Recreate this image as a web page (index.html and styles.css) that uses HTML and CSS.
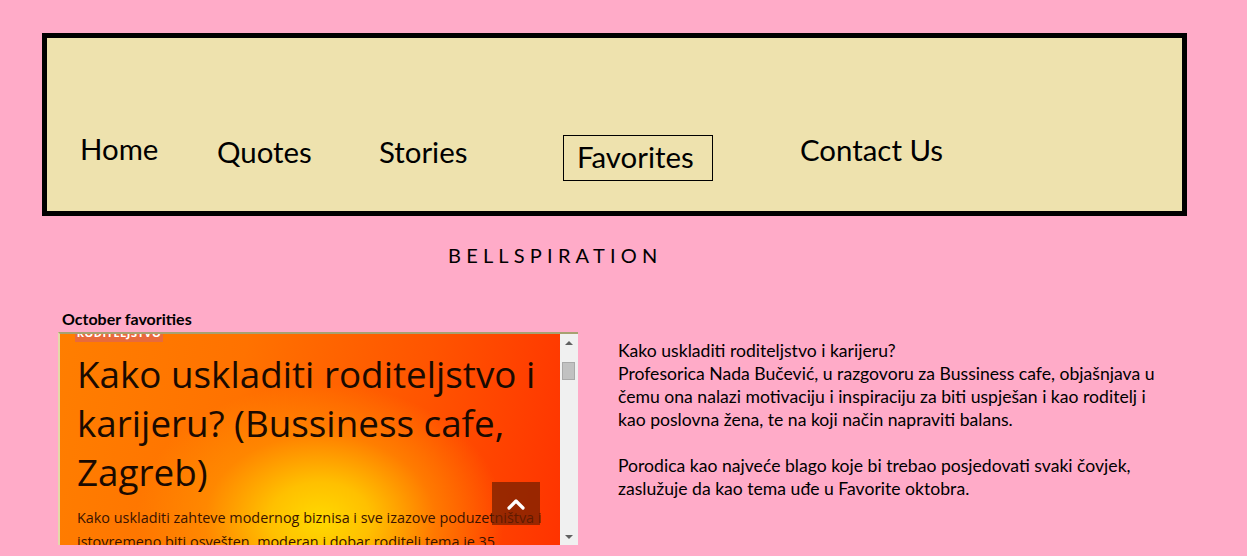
FILE: index.html
```html
<!DOCTYPE html>
<html lang="hr">
<head>
<meta charset="utf-8">
<title>Bellspiration - Favorites</title>
<link rel="stylesheet" href="styles.css">
</head>
<body>
<header class="masthead">
  <nav class="menu">
    <a class="menu-item item-home" href="#">Home</a>
    <a class="menu-item item-quotes" href="#">Quotes</a>
    <a class="menu-item item-stories" href="#">Stories</a>
    <a class="menu-item item-favorites" href="#"><span class="current">Favorites</span></a>
    <a class="menu-item item-contact" href="#">Contact Us</a>
  </nav>
</header>

<h1 class="site-title">BELLSPIRATION</h1>

<main class="content">
  <section class="feature">
    <h2 class="feature-title">October favorities</h2>
    <div class="embed">
      <div class="embed-page">
        <span class="embed-label">RODITELJSTVO</span>
        <h3 class="embed-heading">Kako uskladiti roditeljstvo i karijeru? (Bussiness cafe, Zagreb)</h3>
        <p class="embed-text">Kako uskladiti zahteve modernog biznisa i sve izazove poduzetništva i istovremeno biti osvešten, moderan i dobar roditelj tema je 35</p>
        <span class="to-top">
          <svg width="18" height="12" viewBox="0 0 18 12"><path d="M2 10 L9 3 L16 10" fill="none" stroke="#fff" stroke-width="3.2" stroke-linecap="round" stroke-linejoin="round"/></svg>
        </span>
      </div>
      <div class="scrollbar">
        <span class="arrow arrow-up"></span>
        <div class="track"><span class="thumb"></span></div>
        <span class="arrow arrow-down"></span>
      </div>
    </div>
  </section>
  <section class="description">
    <p>Kako uskladiti roditeljstvo i karijeru?<br>Profesorica Nada Bučević, u razgovoru za Bussiness cafe, objašnjava u čemu ona nalazi motivaciju i inspiraciju za biti uspješan i kao roditelj i kao poslovna žena, te na koji način napraviti balans.</p>
    <p>Porodica kao najveće blago koje bi trebao posjedovati svaki čovjek, zaslužuje da kao tema uđe u Favorite oktobra.</p>
  </section>
</main>
</body>
</html>
```

FILE: styles.css
```css
html, body {
  margin: 0;
  padding: 0;
}

body {
  background: #ffabc8;
  color: #000;
  font-family: "Lato", "Open Sans", sans-serif;
  padding: 33px 0 0 42px;
  height: 556px;
  box-sizing: border-box;
  overflow: hidden;
}

.masthead {
  width: 1145px;
  height: 183px;
  box-sizing: border-box;
  border: 5px solid #000;
  background: #eee2ae;
}

.menu {
  display: grid;
  grid-template-columns: 137px 162px 184px 237px auto;
  padding: 0 0 0 33px;
  align-items: start;
}

.menu-item {
  color: #000;
  text-decoration: none;
  font-size: 29.4px;
  line-height: 36px;
  white-space: nowrap;
  justify-self: start;
}

.item-home { margin-top: 93px; }
.item-quotes { margin-top: 96px; }
.item-stories { margin-top: 96px; }
.item-contact { margin-top: 94px; }

.item-favorites {
  margin-top: 97px;
  border: 1px solid #000;
  width: 150px;
  height: 46px;
  box-sizing: border-box;
  padding: 3px 0 0 13px;
}

.site-title {
  margin: 27px 0 0 406px;
  font-size: 20px;
  font-weight: 400;
  letter-spacing: 5.2px;
  line-height: 24px;
  color: #000;
}

.content {
  display: flex;
  align-items: flex-start;
  margin-top: 43px;
}

.feature {
  margin-left: 16px;
  width: 520px;
}

.feature-title {
  margin: 0 0 4px 4px;
  font-size: 16px;
  font-weight: 700;
  line-height: 18px;
}

.embed {
  display: flex;
  width: 520px;
  height: 213px;
  box-sizing: border-box;
  border-top: 2px solid #a7a171;
  border-left: 2px solid #e5d9a9;
  overflow: hidden;
}

.embed-page {
  position: relative;
  flex: 1;
  overflow: hidden;
  padding: 0 8px 0 17px;
  background:
    radial-gradient(ellipse 230px 170px at 52% 88%, #ffd900 0%, #ffc000 22%, rgba(255,150,0,0.6) 50%, rgba(255,120,0,0) 80%),
    linear-gradient(100deg, #ff7e00 0%, #ff7200 35%, #ff5400 70%, #ff3300 100%);
}

.embed-label {
  display: block;
  width: 88px;
  margin: -10px 0 0 -2px;
  height: 18px;
  line-height: 18px;
  background: #e86a3c;
  color: #fff;
  font-family: "Open Sans", sans-serif;
  font-size: 11px;
  font-weight: 700;
  text-align: center;
  letter-spacing: 0.5px;
}

.embed-heading {
  margin: 8px 0 0 0;
  font-family: "Open Sans", sans-serif;
  font-weight: 400;
  font-size: 36.8px;
  line-height: 49px;
  color: #1a0a00;
}

.embed-text {
  margin: 9px 0 0 0;
  font-family: "Open Sans", sans-serif;
  font-size: 14.4px;
  line-height: 24px;
  color: #3a1200;
}

.to-top {
  position: absolute;
  left: 432px;
  top: 148px;
  width: 48px;
  height: 43px;
  background: rgba(110, 30, 0, 0.7);
  display: flex;
  align-items: center;
  justify-content: center;
}

.scrollbar {
  width: 18px;
  display: flex;
  flex-direction: column;
  background: #f0f0f0;
}

.arrow {
  height: 17px;
  display: flex;
  align-items: center;
  justify-content: center;
}

.arrow-up::before,
.arrow-down::before {
  content: "";
  width: 0;
  height: 0;
  border-left: 4px solid transparent;
  border-right: 4px solid transparent;
}

.arrow-up::before { border-bottom: 4px solid #606060; }
.arrow-down::before { border-top: 4px solid #606060; }

.track {
  flex: 1;
  padding-top: 11px;
}

.thumb {
  display: block;
  width: 13px;
  height: 18px;
  margin-left: 2px;
  background: #c1c1c1;
  border: 1px solid #a9a9a9;
  box-sizing: border-box;
}

.description {
  margin: 29px 0 0 40px;
  width: 548px;
  font-size: 17.6px;
  line-height: 23px;
}

.description p {
  margin: 0 0 23px 0;
}
```
